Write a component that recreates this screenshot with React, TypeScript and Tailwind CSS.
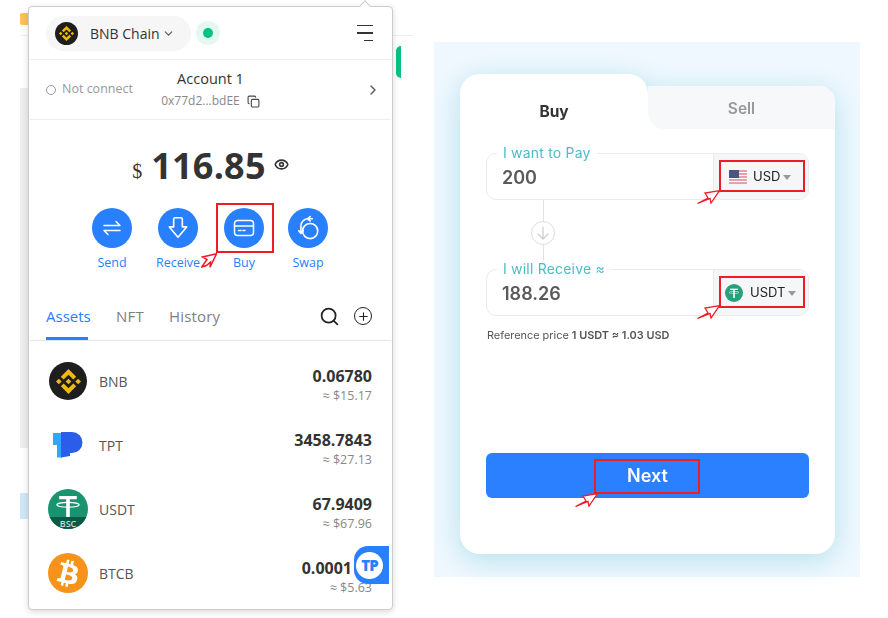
import { ChevronDown, ChevronRight, Copy, Eye, Plus, Search } from "lucide-react";
import { FaBtc } from "react-icons/fa";
import { SiBinance } from "react-icons/si";

const wallet = "font-['Open_Sans','Noto_Sans',sans-serif]";
const panel = "font-['Inter','Noto_Sans',sans-serif]";

const assets = [
  { name: "BNB", amount: "0.06780", usd: "≈ $15.17", icon: "bnb", gap: "" },
  { name: "TPT", amount: "3458.7843", usd: "≈ $27.13", icon: "tpt", gap: "" },
  { name: "USDT", amount: "67.9409", usd: "≈ $67.96", icon: "usdt", gap: "" },
  { name: "BTCB", amount: "0.0001", usd: "≈ $5.63", icon: "btcb", gap: "mr-[20px]" },
];

function BnbLogo({ size, iconSize }: { size: string; iconSize: number }) {
  return (
    <div className={`flex items-center justify-center rounded-full bg-[#1e1e1e] ${size}`}>
      <SiBinance size={iconSize} color="#f0b90b" />
    </div>
  );
}

function TetherMark({ className }: { className: string }) {
  return (
    <svg viewBox="0 0 40 40" className={className} fill="none" stroke="#fff">
      <path d="M9 9.500h22" strokeWidth="4" />
      <path d="M20 9v25" strokeWidth="4.500" />
      <ellipse cx="20" cy="18.500" rx="14" ry="3" strokeWidth="1.500" />
    </svg>
  );
}

function AssetIcon({ kind }: { kind: string }) {
  if (kind === "bnb") return <BnbLogo size="w-[38px] h-[38px]" iconSize={25} />;
  if (kind === "tpt") {
    return (
      <svg viewBox="0 0 40 40" className="h-[40px] w-[40px]">
        <path d="M5 8h9v24.500H9V20H5z" fill="#2ea8ff" />
        <path d="M13 7h11a10.500 10.500 0 0 1 0 21h-2v3l-9 1.500z" fill="#2a5ee8" />
      </svg>
    );
  }
  if (kind === "usdt") {
    return (
      <div className="relative h-[40px] w-[40px] overflow-hidden rounded-full bg-[#1a9470]">
        <TetherMark className="absolute left-[4px] top-[1px] h-[32px] w-[32px]" />
        <div className="absolute bottom-0 left-0 flex h-[12px] w-full items-center justify-center bg-[#0c5a44] text-[9px] font-semibold leading-none text-[#c9dcd6]">
          BSC
        </div>
      </div>
    );
  }
  return (
    <div className="flex h-[40px] w-[40px] items-center justify-center rounded-full bg-[#f7931a]">
      <FaBtc size={27} color="#fff" className="rotate-[14deg]" />
    </div>
  );
}

function ActionIcon({ kind }: { kind: string }) {
  if (kind === "send") {
    return (
      <svg viewBox="0 0 24 24" className="h-[24px] w-[24px]" fill="none" stroke="#fff" strokeWidth="1.500" strokeLinecap="round" strokeLinejoin="round">
        <path d="M4 9.500h16l-4-4" />
        <path d="M20 14.500H4l4 4" />
      </svg>
    );
  }
  if (kind === "receive") {
    return (
      <svg viewBox="0 0 24 24" className="h-[26px] w-[26px]" fill="none" stroke="#fff" strokeWidth="1.500" strokeLinejoin="round">
        <path d="M8 4a1.500 1.500 0 0 1 1.500-1.500h5A1.500 1.500 0 0 1 16 4v7h4L12 20.500 4 11h4z" />
      </svg>
    );
  }
  if (kind === "buy") {
    return (
      <svg viewBox="0 0 24 24" className="h-[24px] w-[24px]" fill="none" stroke="#fff" strokeWidth="1.500" strokeLinecap="round">
        <rect x="2.500" y="4.500" width="19" height="15" rx="3" />
        <path d="M2.500 10h19M6.500 14.500h2.500M11 14.500h2" />
      </svg>
    );
  }
  return (
    <svg viewBox="0 0 24 24" className="h-[26px] w-[26px]" fill="none" stroke="#fff" strokeWidth="1.500" strokeLinecap="round" strokeLinejoin="round">
      <circle cx="14" cy="14.800" r="7" />
      <path d="M16 3.500h-4A6.500 6.500 0 0 0 5.500 10v6.500M14 1.500l-2.500 2 2.500 2M3.500 14.500l2 2.500 2-2.500" />
    </svg>
  );
}

// red outlined pointers drawn over the screenshot
function Pointer({ className }: { className: string }) {
  return (
    <svg viewBox="0 0 23 14" className={`absolute h-[14px] w-[23px] ${className}`} fill="#fff" stroke="#ee1c25" strokeWidth="1.300">
      <path d="M0.500 13.500L11 8 8 3 22.500 0.700 14 13 13 8.500z" />
    </svg>
  );
}

function TallPointer({ className }: { className: string }) {
  return (
    <svg viewBox="0 0 16 15" className={`absolute h-[15px] w-[16px] ${className}`} fill="#fff" stroke="#ee1c25" strokeWidth="1.500">
      <path d="M15.500 0.700L1.500 4 6 6.500 0.700 14 5.500 12.500 9.500 9 9 14.300z" />
    </svg>
  );
}

function Flag() {
  return (
    <div className="relative flex h-[14px] w-[18px] flex-col justify-between overflow-hidden bg-white">
      {[0, 1, 2, 3, 4].map((i) => (
        <div key={i} className="h-[2px] bg-[#e3a3a8]" />
      ))}
      <div className="absolute left-0 top-0 h-[8px] w-[10px] bg-[#4a5680]" />
    </div>
  );
}

function Field({ label, value, unit, icon, inset }: { label: string; value: string; unit: string; icon: React.ReactNode; inset: string }) {
  return (
    <div className="relative flex h-[47px] rounded-[10px] border border-[#ebebeb]">
      <div className="absolute left-[10px] top-[-9px] bg-white px-[6px] text-[14px] leading-[16px] tracking-[0.2px] text-[#4dbcc9]">{label}</div>
      <div className="flex-1 pl-[15px] pt-[13px] text-[18px] font-semibold leading-[22px] text-[#5a5a5a]">{value}</div>
      <div className={`flex w-[95px] items-center rounded-r-[10px] border-l border-[#ebebeb] bg-[#f5f6f8] ${inset}`}>
        {icon}
        <span className="text-[13px] text-[#222]">{unit}</span>
        <div className="ml-[3px] mt-[2px] h-0 w-0 border-x-[4px] border-t-[5px] border-x-transparent border-t-[#999]" />
      </div>
    </div>
  );
}

export default function App() {
  return (
    <div className="relative flex h-[618px] w-[888px] items-start overflow-hidden bg-white pl-[28px] pt-[6px]">
      {/* bits of the page behind the popup */}
      <div className="absolute left-[20px] top-[88px] h-[360px] w-[8px] bg-[#eeeeee]" />
      <div className="absolute left-[20px] top-[13px] h-[12px] w-[8px] rounded-l-[2px] bg-[#fbc25a]" />
      <div className="absolute left-[20px] top-[35px] h-px w-[8px] bg-[#eeeeee]" />
      <div className="absolute left-[20px] top-[493px] h-[26px] w-[8px] bg-[#cfe8f7]" />
      <div className="absolute left-[396px] top-[46px] h-[32px] w-[5px] rounded-l-[5px] bg-[#07c27f]" />
      <div className="absolute left-[393px] top-[35px] h-px w-[20px] bg-[#eeeeee]" />

      <div className={`relative z-10 h-[604px] w-[365px] rounded-[4px] border border-[#cccccc] bg-white shadow-[0_2px_6px_rgba(0,0,0,0.15)] ${wallet}`}>
        <div className="absolute left-[332px] top-[-5px] h-[8px] w-[8px] rotate-45 border-l border-t border-[#cccccc] bg-white" />
        <div className="mx-[1px] flex h-[53px] items-center border-b border-[#eeeeee] pl-[16px] pr-[18px]">
          <div className="flex h-[35px] w-[145px] items-center rounded-full bg-[#f6f6f6] pl-[9px]">
            <BnbLogo size="w-[23px] h-[23px]" iconSize={15} />
            <span className="ml-[12px] text-[14px] text-[#333]">BNB Chain</span>
            <ChevronDown size={13} className="ml-[2px] text-[#555]" />
          </div>
          <div className="ml-[5px] flex h-[24px] w-[24px] items-center justify-center rounded-full bg-[#e4f8f1]">
            <div className="h-[10px] w-[10px] rounded-full bg-[#00c287]" />
          </div>
          <div className="ml-auto flex flex-col items-end gap-[6px]">
            <div className="h-[1.500px] w-[16px] bg-[#333]" />
            <div className="h-[1.500px] w-[16px] bg-[#333]" />
            <div className="h-[1.500px] w-[9px] bg-[#333]" />
          </div>
        </div>

        <div className="relative mx-[1px] flex h-[60px] items-center border-b border-[#eeeeee] pl-[16px] pr-[10px]">
          <div className="h-[10px] w-[10px] rounded-full border border-[#999]" />
          <span className="ml-[6px] text-[12.500px] text-[#999]">Not connect</span>
          <div className="absolute left-[60px] right-[60px] top-0 flex flex-col items-center">
            <span className="mt-[9px] text-[14.500px] leading-[20px] text-[#333]">Account 1</span>
            <div className="mt-[4px] flex items-center gap-[7px] text-[12px] leading-[16px] text-[#888]">
              0x77d2...bdEE
              <Copy size={13} className="text-[#444]" />
            </div>
          </div>
          <ChevronRight size={16} className="ml-auto text-[#555]" />
        </div>

        <div className="flex h-[88px] items-center justify-center pt-[4px]">
          <span className="mr-[9px] mt-[10px] font-['Liberation_Serif',serif] text-[20px] text-[#333]">$</span>
          <span className="text-[36px] font-bold leading-none tracking-[0.2px] text-[#333]">116.85</span>
          <Eye size={15} strokeWidth={2.600} className="mb-[3px] ml-[8px] text-[#333]" />
        </div>

        <div className="flex h-[92px] pl-[63px]">
          {[
            { kind: "send", label: "Send", w: "w-[66px]" },
            { kind: "receive", label: "Receive", w: "w-[66px]" },
            { kind: "buy", label: "Buy", w: "w-[64px]" },
            { kind: "swap", label: "Swap", w: "w-[40px]" },
          ].map((a) => (
            <div key={a.kind} className={a.w}>
              <div className="flex w-[40px] flex-col items-center">
                <div className="flex h-[40px] w-[40px] items-center justify-center rounded-full bg-[#2980fe]">
                  <ActionIcon kind={a.kind} />
                </div>
                <span className="mt-[6px] whitespace-nowrap text-[12.500px] leading-[18px] text-[#2980fe]">{a.label}</span>
              </div>
            </div>
          ))}
        </div>

        <div className="mx-[1px] flex h-[41px] items-start border-b border-[#e6e6e6] pl-[16px] pr-[19px]">
          <div className="flex h-[40px] w-[42px] flex-col border-b-[3px] border-[#2980fe]">
            <span className="mt-[6px] whitespace-nowrap text-[15px] leading-[20px] text-[#2980fe]">Assets</span>
          </div>
          <span className="ml-[28px] mt-[6px] text-[15px] leading-[20px] tracking-[0.2px] text-[#808080]">NFT</span>
          <span className="ml-[25px] mt-[6px] text-[15px] leading-[20px] tracking-[0.2px] text-[#808080]">History</span>
          <Search size={21} className="ml-auto mt-[6px] text-[#222]" />
          <div className="ml-[14px] mt-[7px] flex h-[18px] w-[18px] items-center justify-center rounded-full border border-[#222]">
            <Plus size={13} className="text-[#222]" />
          </div>
        </div>

        <div className="pl-[19px] pr-[20px] pt-[8px]">
          {assets.map((a) => (
            <div key={a.name} className="flex h-[64px] items-center">
              <div className="flex w-[40px] justify-center">
                <AssetIcon kind={a.icon} />
              </div>
              <span className="ml-[11px] text-[14px] text-[#555]">{a.name}</span>
              <div className="ml-auto flex flex-col items-end pt-[9px]">
                <span className={`text-[16px] font-bold leading-[20px] text-[#333] ${a.gap}`}>{a.amount}</span>
                <span className="text-[12.500px] leading-[20px] text-[#888]">{a.usd}</span>
              </div>
            </div>
          ))}
        </div>

        <div className="absolute left-[325px] top-[539px] flex h-[38px] w-[35px] items-center rounded-l-[14px] bg-[#2980fe] pl-[2px]">
          <div className="flex h-[27px] w-[27px] items-center justify-center rounded-full bg-white text-[15px] font-extrabold leading-none tracking-[-1px] text-[#2980fe]">
            TP
          </div>
        </div>
      </div>

      <div className={`relative ml-[41px] mt-[36px] h-[535px] w-[426px] bg-[#eff8fe] pl-[26px] pt-[32px] ${panel}`}>
        <div className="w-[375px] drop-shadow-[0_6px_14px_rgba(110,195,215,0.45)]">
          <div className="flex h-[55px] items-end">
            <div className="flex h-[55px] w-[188px] items-center justify-center rounded-t-[20px] bg-white pt-[20px] text-[15.500px] font-bold text-[#333]">
              Buy
            </div>
            <div className="h-[43px] w-[187px] rounded-tr-[16px] bg-white">
              <div className="flex h-[43px] items-center justify-center rounded-bl-[16px] rounded-tr-[16px] bg-[#f6f8fa] pt-[2px] text-[15.500px] font-semibold text-[#999]">
                Sell
              </div>
            </div>
          </div>

          <div className="flex h-[425px] flex-col rounded-b-[20px] bg-white px-[26px] pt-[24px]">
            <Field label="I want to Pay" value="200" unit="USD" inset="pl-[15px]" icon={<div className="mr-[6px]"><Flag /></div>} />
            <div className="flex h-[69px] w-[114px] flex-col items-center">
              <div className="h-[21px] w-px bg-[#e2e2e2]" />
              <div className="flex h-[24px] w-[24px] shrink-0 items-center justify-center rounded-full border border-[#dddddd]">
                <svg viewBox="0 0 16 16" className="h-[16px] w-[16px]" fill="none" stroke="#cccccc" strokeWidth="1.200" strokeLinecap="round" strokeLinejoin="round">
                  <path d="M8 2v12M3 9l5 5 5-5" />
                </svg>
              </div>
              <div className="h-[24px] w-px bg-[#e2e2e2]" />
            </div>
            <Field
              label="I will Receive ≈"
              value="188.26"
              unit="USDT"
              inset="pl-[11px]"
              icon={
                <div className="mr-[7px] flex h-[18px] w-[18px] items-center justify-center rounded-full bg-[#26a17b]">
                  <TetherMark className="h-[14px] w-[14px]" />
                </div>
              }
            />
            <p className="ml-[1px] mt-[12px] text-[10.900px] leading-[14px] text-[#555]">
              Reference price <span className="font-semibold">1 USDT ≈ 1.03 USD</span>
            </p>
            <button className="mt-[111px] h-[45px] rounded-[6px] bg-[#2b80ff] text-[18px] font-semibold text-white">Next</button>
          </div>
        </div>
      </div>

      {/* annotations */}
      <div className="absolute left-[216px] top-[203px] z-20 h-[50px] w-[58px] border-2 border-[#ee1c25]" />
      <TallPointer className="left-[201px] top-[253px] z-20" />
      <div className="absolute left-[719px] top-[160px] z-20 h-[32px] w-[86px] border-2 border-[#ee1c25]" />
      <Pointer className="left-[697px] top-[190px] z-20" />
      <div className="absolute left-[719px] top-[276px] z-20 h-[32px] w-[86px] border-2 border-[#ee1c25]" />
      <Pointer className="left-[697px] top-[305px] z-20" />
      <div className="absolute left-[594px] top-[459px] z-20 h-[35px] w-[106px] border-2 border-[#ee1c25]" />
      <Pointer className="left-[575px] top-[493px] z-20" />
    </div>
  );
}
